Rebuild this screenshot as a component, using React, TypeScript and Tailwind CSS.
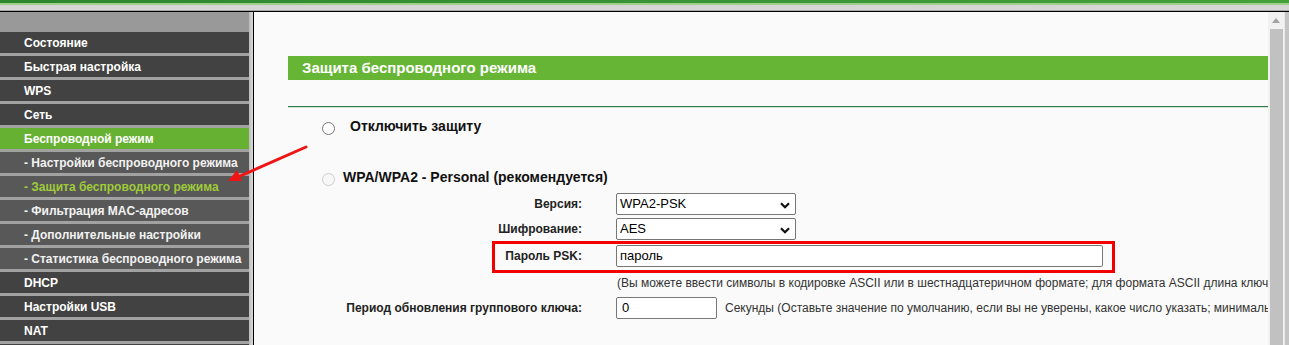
const menu = [
  { label: 'Состояние', kind: 'main' },
  { label: 'Быстрая настройка', kind: 'main' },
  { label: 'WPS', kind: 'main' },
  { label: 'Сеть', kind: 'main' },
  { label: 'Беспроводной режим', kind: 'open' },
  { label: '- Настройки беспроводного режима', kind: 'sub' },
  { label: '- Защита беспроводного режима', kind: 'active' },
  { label: '- Фильтрация MAC-адресов', kind: 'sub' },
  { label: '- Дополнительные настройки', kind: 'sub' },
  { label: '- Статистика беспроводного режима', kind: 'sub' },
  { label: 'DHCP', kind: 'main' },
  { label: 'Настройки USB', kind: 'main' },
  { label: 'NAT', kind: 'main' },
];

function Chevron() {
  return (
    <svg width="10" height="7" viewBox="0 0 10 7" className="absolute right-[5px] top-[8px]">
      <path d="M1 1.2 L5 5.2 L9 1.2" fill="none" stroke="#111" strokeWidth="2.2" />
    </svg>
  );
}

function SelectBox({ value }: { value: string }) {
  return (
    <div className="relative ml-[34px] h-[22px] w-[180px] rounded-[2px] border border-[#767676] bg-white pl-[3px] text-[13px] leading-[20px] text-black">
      {value}
      <Chevron />
    </div>
  );
}

export default function App() {
  return (
    <div className="relative h-[345px] w-[1289px] overflow-hidden bg-[#fafafa] font-['Liberation_Sans',Arial,sans-serif]">
      {/* top strip */}
      <div className="h-[3px] bg-gradient-to-r from-[#2c8630] to-[#45a03b]" />
      <div className="h-[2px] bg-[#9fd08a]" />
      <div className="h-[5px] bg-[#d6d6d6]" />
      <div className="h-px bg-[#a9a9a9]" />
      <div className="h-px bg-black" />

      <div className="flex h-[333px]">
        {/* sidebar */}
        <div className="w-[249px] shrink-0 bg-[#424242]">
          <div className="h-[20px] bg-[#999999]" />
          {menu.map((item) => (
            <div
              key={item.label}
              className={
                'h-[24px] border-b-[3px] border-[#a2a2a2] pl-[24px] pt-px text-[12px] font-bold leading-[20px] whitespace-nowrap ' +
                (item.kind === 'main'
                  ? 'bg-[#424242] text-white'
                  : item.kind === 'open'
                    ? 'bg-[#66b132] text-white'
                    : item.kind === 'active'
                      ? 'bg-[#585858] text-[#9fcb3a]'
                      : 'bg-[#585858] text-[#f2f2f2]')
              }
            >
              {item.label}
            </div>
          ))}
        </div>
        <div className="w-[4px] shrink-0 bg-gradient-to-r from-[#bdbdbd] to-[#d9d9d9]" />
        <div className="w-px shrink-0 bg-black" />

        {/* content */}
        <div className="relative min-w-0 flex-1 overflow-hidden bg-[#fafafa] pl-[34px] pt-[44px] text-[#222]">
          <div className="h-[24px] bg-[#66b534] pl-[14px] text-[15px] font-bold leading-[24px] text-white">
            Защита беспроводного режима
          </div>
          <div className="mt-[26px] h-px bg-[#2b7b4c]" />
          <div className="h-px bg-[#d3e6d6]" />

          <div className="mt-[8px] flex h-[20px] items-start">
            <input type="radio" name="sec" className="m-0 ml-[34px] mt-[6px] h-[13px] w-[13px] shrink-0" />
            <span className="ml-[15px] text-[14px] font-bold leading-[20px] text-[#111]">Отключить защиту</span>
          </div>

          <div className="mt-[31px] flex h-[20px] items-start">
            <input type="radio" name="sec" disabled className="m-0 ml-[34px] mt-[6px] h-[13px] w-[13px] shrink-0" />
            <span className="ml-[8px] text-[14px] font-bold leading-[20px] text-[#111]">
              WPA/WPA2 - Personal (рекомендуется)
            </span>
          </div>

          <div className="mt-[6px] flex items-center">
            <div className="w-[294px] text-right text-[12px] font-bold">Версия:</div>
            <SelectBox value="WPA2-PSK" />
          </div>

          <div className="mt-[3px] flex items-center">
            <div className="w-[294px] text-right text-[12px] font-bold">Шифрование:</div>
            <SelectBox value="AES" />
          </div>

          <div className="relative mt-[5px] flex items-center">
            <div className="w-[294px] text-right text-[12px] font-bold">Пароль PSK:</div>
            <div className="ml-[34px] h-[22px] w-[487px] rounded-[2px] border border-[#767676] bg-white pl-[3px] text-[13px] leading-[20px] text-black">
              пароль
            </div>
            <div className="absolute -top-[4px] left-[204px] h-[32px] w-[623px] border-[3px] border-[#f20000]" />
          </div>

          <div className="mt-[8px] whitespace-nowrap pl-[329px] text-[12px] leading-[16px] text-[#333]">
            (Вы можете ввести символы в кодировке ASCII или в шестнадцатеричном формате; для формата ASCII длина ключа должна составлять от 8 до 63 символов)
          </div>

          <div className="mt-[6px] flex items-center whitespace-nowrap">
            <div className="w-[294px] shrink-0 text-right text-[12px] font-bold">Период обновления группового ключа:</div>
            <div className="ml-[34px] h-[22px] w-[101px] shrink-0 rounded-[2px] border border-[#767676] bg-white pl-[5px] text-[13px] leading-[20px] text-black">
              0
            </div>
            <span className="ml-[8px] text-[12px] text-[#333]">
              Секунды (Оставьте значение по умолчанию, если вы не уверены, какое число указать; минимальное значение 30, 0 – отключение)
            </span>
          </div>
        </div>

        {/* scrollbar */}
        <div className="flex w-[16px] shrink-0 flex-col bg-[#f1f1f1]">
          <div className="flex h-[17px] items-center justify-center">
            <svg width="8" height="5" viewBox="0 0 8 5">
              <path d="M0 5 L4 0 L8 5 Z" fill="#a3a3a3" />
            </svg>
          </div>
          <div className="ml-[2px] w-[13px] flex-1 bg-[#c1c1c1]" />
        </div>
        <div className="w-px shrink-0 bg-[#e8e8e8]" />
        <div className="w-[4px] shrink-0 bg-[#c4c4c4]" />
      </div>

      {/* red annotation arrow */}
      <svg className="pointer-events-none absolute left-0 top-0" width="1289" height="345" viewBox="0 0 1289 345">
        <line x1="306" y1="147" x2="238" y2="177" stroke="#f01414" strokeWidth="3" strokeLinecap="round" />
        <polygon points="228,181 242,181 237,170" fill="#f01414" />
      </svg>
    </div>
  );
}
